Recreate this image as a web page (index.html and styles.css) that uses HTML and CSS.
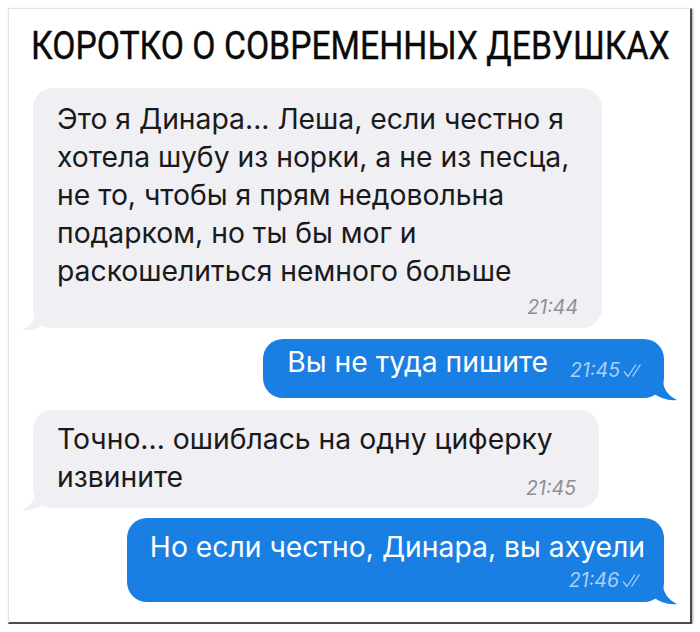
FILE: index.html
```html
<!DOCTYPE html>
<html lang="ru">
<head>
<meta charset="utf-8">
<link rel="stylesheet" href="styles.css">
</head>
<body>
<div class="card">
  <h1 class="title"><span class="title-text">КОРОТКО О СОВРЕМЕННЫХ ДЕВУШКАХ</span></h1>
  <div class="chat">
    <div class="bubble in b1">
      <p class="text">Это я Динара... Леша, если честно я<br>хотела шубу из норки, а не из песца,<br>не то, чтобы я прям недовольна<br>подарком, но ты бы мог и<br>раскошелиться немного больше</p>
      <div class="time">21:44</div>
      <svg class="tail tail-in" width="24" height="22" viewBox="0 0 24 22"><path d="M24 0 L14 0 C14 9 10 16 0 21 C9 22 17 19 24 14 Z"/></svg>
    </div>
    <div class="bubble out b2">
      <p class="text">Вы не туда пишите</p>
      <span class="time">21:45<svg class="check" width="24" height="15" viewBox="0 0 24 15"><path d="M2 8.5 L6 13.5 L14 1.5 M10.5 13.5 L18.5 1.5"/></svg></span>
      <svg class="tail tail-out" width="24" height="22" viewBox="0 0 24 22"><path d="M0 0 L10 0 C10 9 14 16 24 21 C15 22 7 19 0 14 Z"/></svg>
    </div>
    <div class="bubble in b3">
      <p class="text">Точно... ошиблась на одну циферку<br>извините</p>
      <div class="time">21:45</div>
      <svg class="tail tail-in" width="24" height="22" viewBox="0 0 24 22"><path d="M24 0 L14 0 C14 9 10 16 0 21 C9 22 17 19 24 14 Z"/></svg>
    </div>
    <div class="bubble out b4">
      <p class="text">Но если честно, Динара, вы ахуели</p>
      <div class="time">21:46<svg class="check" width="24" height="15" viewBox="0 0 24 15"><path d="M2 8.5 L6 13.5 L14 1.5 M10.5 13.5 L18.5 1.5"/></svg></div>
      <svg class="tail tail-out" width="24" height="22" viewBox="0 0 24 22"><path d="M0 0 L10 0 C10 9 14 16 24 21 C15 22 7 19 0 14 Z"/></svg>
    </div>
  </div>
</div>
</body>
</html>
```
FILE: styles.css
```css
html, body {
  margin: 0;
  padding: 0;
  background: #ffffff;
}

body {
  font-family: "Inter", "Liberation Sans", Arial, sans-serif;
  color: #111111;
  overflow: hidden;
}

.card {
  margin: 8px 0 0 8px;
  width: 681px;
  height: 613px;
  border-top: 1px solid #e2e2e2;
  border-left: 1px solid #e2e2e2;
  border-right: 2px solid #4c4c4c;
  border-bottom: 2px solid #4c4c4c;
  box-shadow: 1px 1px 2px rgba(0, 0, 0, 0.35);
  background: #ffffff;
  overflow: hidden;
}

.title {
  margin: 0;
  padding: 15px 0 0 22px;
  height: 63px;
  box-sizing: border-box;
  font-family: "Roboto", "Liberation Sans", sans-serif;
  font-weight: 400;
  font-size: 38px;
  line-height: 44px;
  color: #0a0a0a;
  white-space: nowrap;
}

.title-text {
  display: inline-block;
  transform: scaleX(0.888);
  transform-origin: left center;
  -webkit-text-stroke: 0.4px #0a0a0a;
}

.chat {
  display: flex;
  flex-direction: column;
  padding: 16px 26px 0 24px;
}

.bubble {
  position: relative;
  border-radius: 20px;
  display: flex;
  flex-direction: column;
}

.text {
  margin: 0;
  font-size: 28.3px;
  line-height: 38px;
  white-space: nowrap;
}

.time {
  font-style: italic;
  font-size: 19.5px;
  line-height: 22px;
  align-self: flex-end;
  white-space: nowrap;
}

.in {
  align-self: flex-start;
  background: #efeff4;
  color: #1a1a1a;
}

.in .time {
  color: #8e8e93;
}

.out {
  align-self: flex-end;
  background: #1a7fe3;
  color: #ffffff;
}

.out .time {
  color: #a9d1f8;
}

.check {
  margin-left: 2px;
  vertical-align: -1px;
}

.check path {
  fill: none;
  stroke: #a9d1f8;
  stroke-width: 1.3;
}

.tail {
  position: absolute;
  bottom: -3px;
}

.tail-in {
  left: -11px;
}

.tail-in path {
  fill: #efeff4;
}

.tail-out {
  right: -13px;
}

.tail-out path {
  fill: #1a7fe3;
}

.b1 {
  width: 521px;
  padding: 12px 24px 10px 24px;
}

.b1 .time {
  margin-top: 6px;
}

.b2 {
  margin-top: 11px;
  flex-direction: row;
  align-items: flex-start;
  padding: 4px 18px 17px 24px;
}

.b2 .time {
  margin-left: 22px;
  align-self: flex-start;
  margin-top: 16px;
}

.b3 {
  margin-top: 12px;
  width: 519px;
  padding: 10px 23px 9px 24px;
}

.b3 .time {
  margin-top: -19px;
}

.b4 {
  margin-top: 10px;
  padding: 10px 19px 11px 23px;
}

.b4 .time {
  margin-top: 3px;
}
```
